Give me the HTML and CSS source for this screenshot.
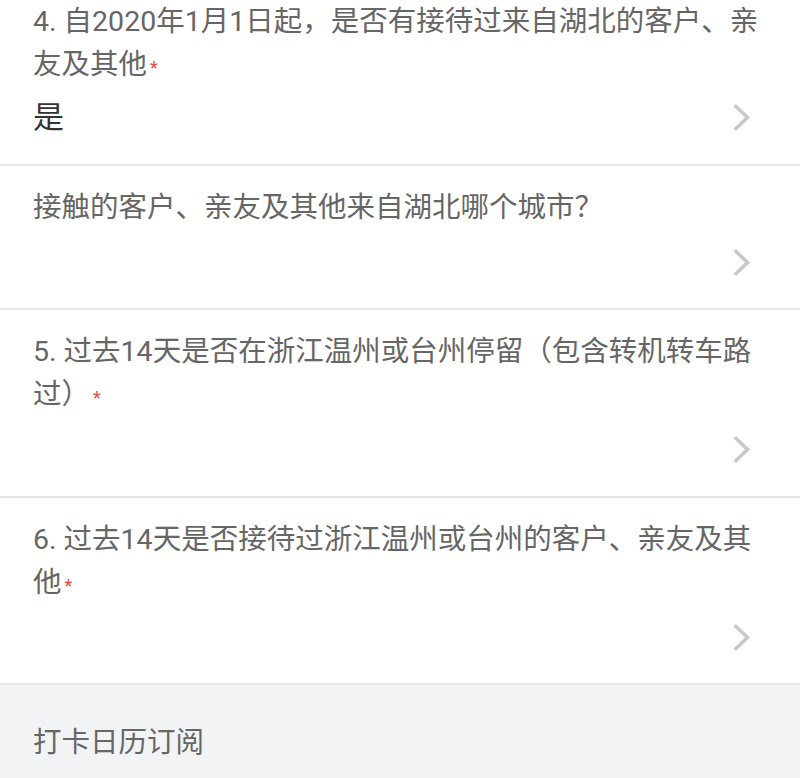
FILE: index.html
```html
<!DOCTYPE html>
<html lang="zh-CN">
<head>
<meta charset="utf-8">
<title>表单</title>
<link rel="stylesheet" href="styles.css">
</head>
<body>
<div class="list">
  <div class="item item--first">
    <div class="q">4. 自2020年1月1日起，是否有接待过来自湖北的客户、亲友及其他<span class="req">*</span></div>
    <div class="row">
      <span class="answer">是</span>
      <svg class="chev" width="18" height="27" viewBox="0 0 18 27"><polyline points="3,2.5 14.5,13.5 3,24.5" fill="none" stroke="#c9c9c9" stroke-width="3.6" stroke-linecap="square"/></svg>
    </div>
  </div>
  <div class="item">
    <div class="q">接触的客户、亲友及其他来自湖北哪个城市？</div>
    <div class="row">
      <span class="answer"></span>
      <svg class="chev" width="18" height="27" viewBox="0 0 18 27"><polyline points="3,2.5 14.5,13.5 3,24.5" fill="none" stroke="#c9c9c9" stroke-width="3.6" stroke-linecap="square"/></svg>
    </div>
  </div>
  <div class="item">
    <div class="q">5. 过去14天是否在浙江温州或台州停留（包含转机转车路过）<span class="req">*</span></div>
    <div class="row">
      <span class="answer"></span>
      <svg class="chev" width="18" height="27" viewBox="0 0 18 27"><polyline points="3,2.5 14.5,13.5 3,24.5" fill="none" stroke="#c9c9c9" stroke-width="3.6" stroke-linecap="square"/></svg>
    </div>
  </div>
  <div class="item">
    <div class="q">6. 过去14天是否接待过浙江温州或台州的客户、亲友及其他<span class="req">*</span></div>
    <div class="row">
      <span class="answer"></span>
      <svg class="chev" width="18" height="27" viewBox="0 0 18 27"><polyline points="3,2.5 14.5,13.5 3,24.5" fill="none" stroke="#c9c9c9" stroke-width="3.6" stroke-linecap="square"/></svg>
    </div>
  </div>
</div>
<div class="footer">打卡日历订阅</div>
</body>
</html>
```
FILE: styles.css
```css
html, body {
  margin: 0;
  padding: 0;
  background: #f2f3f5;
}
body {
  font-family: Roboto, "Noto Sans CJK SC", sans-serif;
}
.list {
  background: #fff;
}
.item {
  padding: 20px 33px 24.5px 33px;
  border-bottom: 2px solid #e6e6e6;
}
.item--first {
  padding-top: 0;
}
.q {
  font-size: 28.5px;
  line-height: 43px;
  color: #666;
}
.req {
  font-size: 18px;
  line-height: 1;
  color: #e5484d;
  margin-left: 3px;
}
.row {
  margin-top: 12px;
  height: 43px;
  display: flex;
  align-items: center;
  justify-content: space-between;
}
.item--first .row {
  margin-top: 10px;
}
.answer {
  font-size: 31px;
  color: #333;
  line-height: 43px;
}
.chev {
  display: block;
  margin-right: 16px;
}
.footer {
  padding: 36px 33px;
  font-size: 28.5px;
  line-height: 43px;
  color: #666;
  background: #f2f3f5;
}
```
